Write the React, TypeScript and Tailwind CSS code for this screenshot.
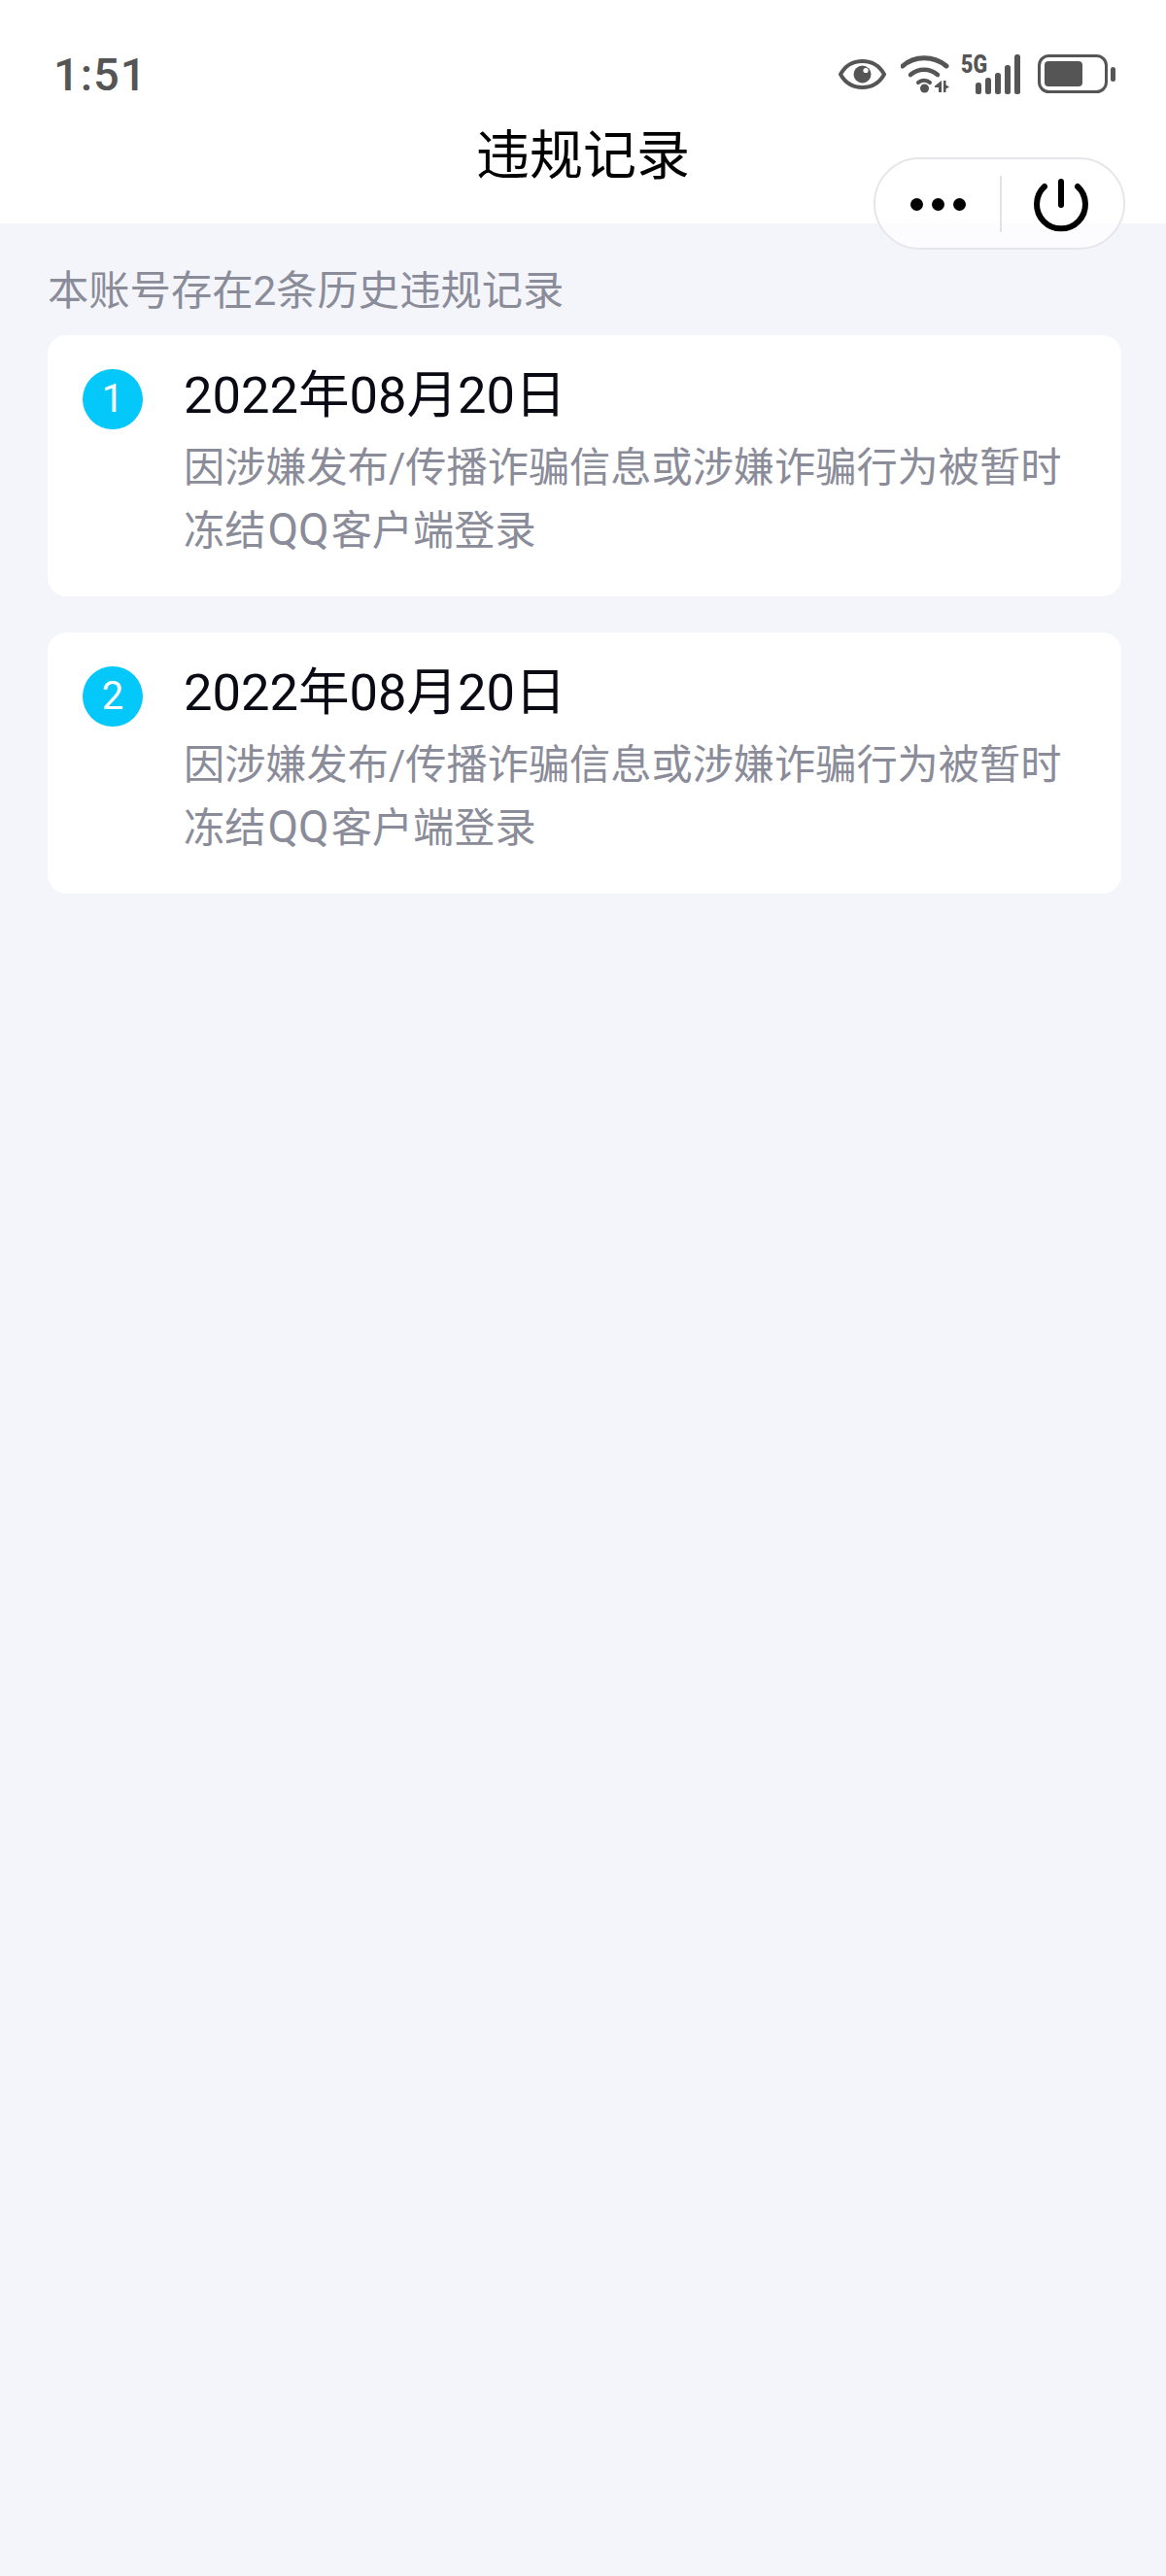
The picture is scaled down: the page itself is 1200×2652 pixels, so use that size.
const records = [
  { id: 1, date: '2022年08月20日' },
  { id: 2, date: '2022年08月20日' },
];

function EyeIcon() {
  return (
    <svg width="49" height="31" viewBox="0 0 49 31" fill="none">
      <path d="M2 15.5C7 6.5 15 2 24.5 2S42 6.5 47 15.5C42 24.5 34 29 24.5 29S7 24.5 2 15.5Z" stroke="#555" strokeWidth="4" strokeLinejoin="round" />
      <circle cx="24.5" cy="15.5" r="9" fill="#555" />
      <circle cx="28" cy="11.5" r="2.6" fill="#fff" />
    </svg>
  );
}

function WifiIcon() {
  return (
    <svg width="50" height="40" viewBox="0 0 50 40" fill="none">
      <path d="M2 12C14 1 34 1 47 12" stroke="#555" strokeWidth="5" strokeLinecap="round" />
      <path d="M10 21C18 14 30 14 38 21" stroke="#555" strokeWidth="4.5" strokeLinecap="round" />
      <path d="M18 29C21 26 27 26 30 29" stroke="#555" strokeWidth="4" strokeLinecap="round" />
      <circle cx="24.5" cy="35" r="4.5" fill="#555" />
      <path d="M42 27V39H39V34H35V32.5Z" fill="#555" />
      <path d="M44 27H46.5V31.5L50 33.5L46.5 35.5V39H44Z" fill="#555" />
    </svg>
  );
}

function SignalIcon() {
  return (
    <svg width="61" height="41" viewBox="0 0 61 41" className="overflow-visible">
      <text x="0" y="19" textLength="27" lengthAdjust="spacingAndGlyphs" fontSize="26" fontWeight="900" fill="#555" className="font-['Roboto']">5G</text>
      <rect x="15" y="29" width="6" height="12" rx="2.5" fill="#555" />
      <rect x="25" y="24" width="6" height="17" rx="2.5" fill="#555" />
      <rect x="35" y="19" width="6" height="22" rx="2.5" fill="#555" />
      <rect x="45" y="11" width="6" height="30" rx="2.5" fill="#555" />
      <rect x="55" y="0" width="6" height="41" rx="2.5" fill="#555" />
    </svg>
  );
}

function BatteryIcon() {
  return (
    <svg width="80" height="40" viewBox="0 0 80 40" fill="none">
      <rect x="1.5" y="1.5" width="69" height="37" rx="10" stroke="#555" strokeWidth="3" />
      <rect x="7" y="7" width="39" height="26" rx="4" fill="#555" />
      <rect x="75" y="13" width="5" height="15" rx="2.5" fill="#555" />
    </svg>
  );
}

function PowerIcon() {
  return (
    <svg width="60" height="60" viewBox="0 0 60 60" fill="none">
      <path d="M13 12A25 25 0 1 0 47 12" stroke="#000" strokeWidth="6" strokeLinecap="round" />
      <path d="M30 7V31" stroke="#000" strokeWidth="6" strokeLinecap="round" />
    </svg>
  );
}

export default function App() {
  return (
    <main className="relative min-h-screen bg-[#f4f5fa] font-['Roboto','Noto_Sans_CJK_SC',sans-serif]">
      {/* header */}
      <header className="bg-white pt-[57px] pb-[35px]">
        <div className="flex h-[40px] items-center justify-between pl-[55px] pr-[52px]">
          <span className="text-[47px] leading-[40px] font-medium tracking-[1px] text-[#555]">1:51</span>
          <div className="flex -translate-y-px items-center">
            <EyeIcon />
            <div className="ml-[15px]"><WifiIcon /></div>
            <div className="ml-[12px]"><SignalIcon /></div>
            <div className="ml-[18px]"><BatteryIcon /></div>
          </div>
        </div>
        <h1 className="mt-[28px] text-center text-[55px] leading-[70px] font-normal text-black">违规记录</h1>
      </header>

      {/* capsule */}
      <div className="absolute top-[162px] left-[899px] flex h-[95px] w-[259px] items-center rounded-full border-2 border-[#e6e6ea] bg-white/70">
        <div className="flex w-[128px] justify-center gap-[9px] pt-[1px]">
          <span className="h-[13px] w-[13px] rounded-full bg-black"></span>
          <span className="h-[13px] w-[13px] rounded-full bg-black"></span>
          <span className="h-[13px] w-[13px] rounded-full bg-black"></span>
        </div>
        <div className="h-[58px] w-[2px] bg-[#e2e2e4]"></div>
        <div className="flex flex-1 justify-center pr-[3px]"><PowerIcon /></div>
      </div>

      {/* list */}
      <section className="px-[46px] pt-[40px] pl-[49px]">
        <p className="mb-[15px] text-[42.3px] leading-[60px] text-[#8b8c99]">本账号存在2条历史违规记录</p>
        <div className="flex flex-col gap-[37px]">
          {records.map(r => (
            <div key={r.id} className="flex items-start gap-[42px] rounded-[20px] bg-white pt-[30px] pr-[44px] pb-[35px] pl-[36px]">
              <div className="mt-[5px] flex h-[62px] w-[62px] shrink-0 items-center justify-center rounded-full bg-[#05c8fa] text-[40px] leading-none text-white">{r.id}</div>
              <div className="min-w-0 flex-1">
                <h3 className="text-[52.5px] leading-[64px] font-normal text-[#0a0a14]">{r.date}</h3>
                <p className="mt-[10px] text-[42.2px] leading-[65px] text-[#8b8c99]">
                  因涉嫌发布/传播诈骗信息或涉嫌诈骗行为被暂时冻结<span className="mx-[2px] text-[46px] leading-none">QQ</span>客户端登录
                </p>
              </div>
            </div>
          ))}
        </div>
      </section>
    </main>
  );
}
